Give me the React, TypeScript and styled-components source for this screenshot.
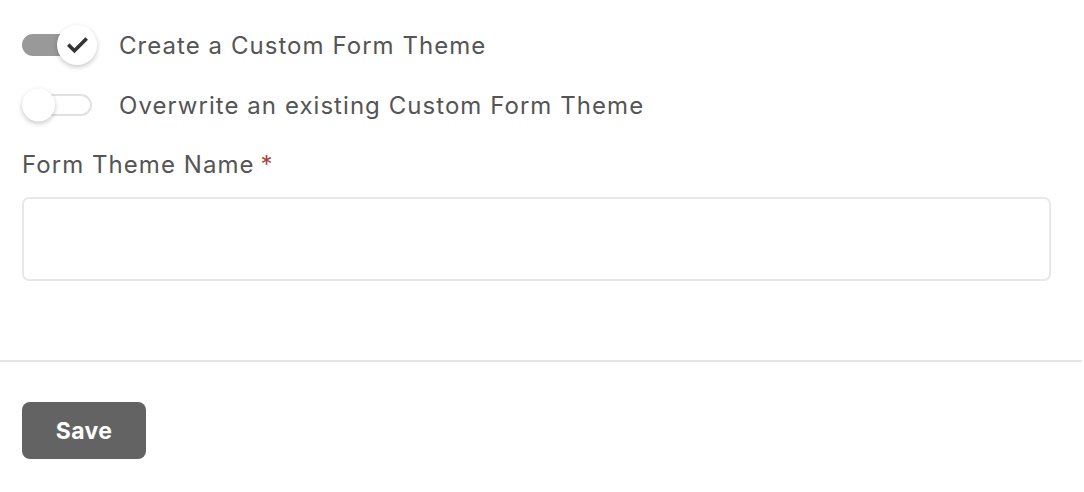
import React, { useState } from 'react'
import styled, { createGlobalStyle } from 'styled-components'

const GlobalStyle = createGlobalStyle`
  body {
    margin: 0;
    background: #fff;
    font-family: Inter, "Noto Sans", sans-serif;
    color: #555;
  }
`

const Page = styled.div`
  width: 1082px;
  padding-top: 24px;
`

const Section = styled.div`
  padding: 0 31px 0 22px;
`

const ToggleList = styled.ul`
  list-style: none;
  margin: 0;
  padding: 0;
  display: flex;
  flex-direction: column;
  gap: 18px;
`

const ToggleRow = styled.li`
  display: flex;
  align-items: center;
  gap: 27px;
  height: 42px;
  font-size: 24px;
  letter-spacing: 1.05px;
  color: #555;
  cursor: pointer;
`

const Track = styled.span<{ $on: boolean }>`
  position: relative;
  flex: none;
  width: 70px;
  height: 22px;
  box-sizing: border-box;
  border-radius: 11px;
  background: ${p => (p.$on ? '#999' : '#fff')};
  border: 2px solid ${p => (p.$on ? '#999' : '#e1e1e1')};
`

const Knob = styled.span<{ $on: boolean }>`
  position: absolute;
  top: 50%;
  left: ${p => (p.$on ? '33px' : '-2px')};
  width: ${p => (p.$on ? '40px' : '33px')};
  height: ${p => (p.$on ? '40px' : '33px')};
  transform: translateY(-50%);
  border-radius: 50%;
  background: #fff;
  box-shadow: 0 2px 5px rgba(0, 0, 0, 0.22);
  display: flex;
  align-items: center;
  justify-content: center;
  color: #333;
`

const Label = styled.label`
  display: block;
  margin-top: 24px;
  font-size: 24px;
  letter-spacing: 1.05px;
  color: #555;
`

const Required = styled.span`
  color: #a3453d;
  margin-left: 6px;
`

const TextInput = styled.input`
  display: block;
  box-sizing: border-box;
  width: 100%;
  height: 84px;
  margin-top: 18px;
  border: 2px solid #e6e8ec;
  border-radius: 7px;
  background: #fff;
  font: inherit;
  font-size: 22px;
  padding: 0 16px;
  outline: none;
`

const Divider = styled.hr`
  margin: 79px 0 0;
  border: none;
  border-top: 2px solid #e6e6e6;
`

const Footer = styled.div`
  padding: 40px 22px 0;
`

const SaveButton = styled.button`
  width: 124px;
  height: 57px;
  border: none;
  border-radius: 8px;
  background: #636363;
  color: #fff;
  font-family: Inter, "Noto Sans", sans-serif;
  font-weight: 700;
  font-size: 23px;
  letter-spacing: 0.3px;
  cursor: pointer;
`

const Check = () => (
  <svg width="21" height="21" viewBox="0 0 24 24" fill="none">
    <path d="M3 12.5l5.5 5.5L21 5.5" stroke="#333" strokeWidth="4.2" strokeLinecap="square" />
  </svg>
)

const Toggle = ({ on }: { on: boolean }) => (
  <Track $on={on}>
    <Knob $on={on}>{on && <Check />}</Knob>
  </Track>
)

export default function App() {
  const [mode, setMode] = useState<'create' | 'overwrite'>('create')
  return (
    <Page>
      <GlobalStyle />
      <Section>
        <ToggleList>
          <ToggleRow onClick={() => setMode('create')}>
            <Toggle on={mode === 'create'} />
            Create a Custom Form Theme
          </ToggleRow>
          <ToggleRow onClick={() => setMode('overwrite')}>
            <Toggle on={mode === 'overwrite'} />
            Overwrite an existing Custom Form Theme
          </ToggleRow>
        </ToggleList>
        <Label htmlFor="theme-name">
          Form Theme Name<Required>*</Required>
        </Label>
        <TextInput id="theme-name" type="text" />
      </Section>
      <Divider />
      <Footer>
        <SaveButton>Save</SaveButton>
      </Footer>
    </Page>
  )
}
